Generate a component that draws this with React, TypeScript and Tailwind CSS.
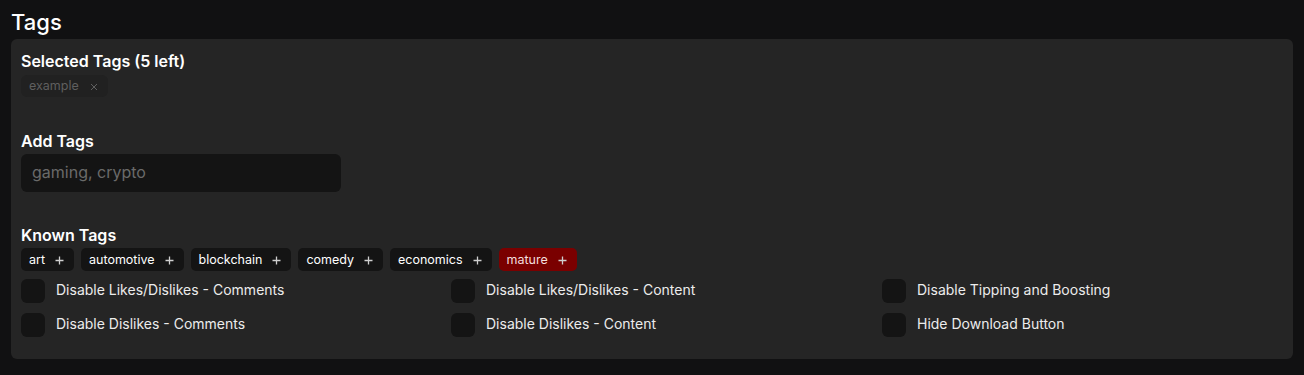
import React, { useState } from 'react';

const knownTags = ['art', 'automotive', 'blockchain', 'comedy', 'economics', 'mature'];

const options = [
  'Disable Likes/Dislikes - Comments',
  'Disable Likes/Dislikes - Content',
  'Disable Tipping and Boosting',
  'Disable Dislikes - Comments',
  'Disable Dislikes - Content',
  'Hide Download Button',
];

const PlusIcon = () => (
  <svg width="9" height="9" viewBox="0 0 9 9" fill="none" stroke="currentColor" strokeWidth="1.3">
    <path d="M4.5 0.5v8M0.5 4.5h8" />
  </svg>
);

const XIcon = () => (
  <svg width="8" height="8" viewBox="0 0 8 8" fill="none" stroke="currentColor" strokeWidth="1">
    <path d="M1 1l6 6M7 1L1 7" />
  </svg>
);

export default function App() {
  const [checked, setChecked] = useState<Record<string, boolean>>({});

  return (
    <div className="min-h-[375px] bg-[#111112] px-[11px] pt-[8px] font-['Inter',sans-serif] text-white">
      <h2 className="text-[22px] leading-[28px] font-medium">Tags</h2>

      <div className="mt-[3px] rounded-md bg-[#252525] px-[10px] pt-[10px] pb-[22px]">
        {/* selected */}
        <div className="text-[16px] leading-[24px] font-semibold">Selected Tags (5 left)</div>
        <div className="mt-[2px] flex">
          <span className="flex h-[22px] items-center gap-[11px] rounded-md bg-[#212121] pl-[8px] pr-[10px] pt-[1px] text-[12.5px] text-[#5f5f5f]">
            example
            <XIcon />
          </span>
        </div>

        {/* add */}
        <div className="mt-[32px] text-[16px] leading-[24px] font-semibold">Add Tags</div>
        <input
          className="mt-[1px] h-[38px] w-[320px] rounded-md bg-[#141414] px-[11px] pb-[2px] text-[16px] text-white placeholder-[#6a6a6a] outline-none"
          placeholder="gaming, crypto"
        />

        {/* known */}
        <div className="mt-[31px] text-[16px] leading-[24px] font-semibold">Known Tags</div>
        <div className="mt-[1px] flex gap-[7px]">
          {knownTags.map((t) => (
            <span
              key={t}
              className={`flex h-[23px] items-center gap-[10px] rounded-[5px] pl-[8px] pr-[10px] pt-[1px] text-[12.5px] ${
                t === 'mature' ? 'bg-[#7a0000] text-[#f3dede]' : 'bg-[#141414] text-white'
              }`}
            >
              {t}
              <span className="text-[#cfcfcf]">
                <PlusIcon />
              </span>
            </span>
          ))}
        </div>

        {/* options */}
        <div className="mt-[8px] grid grid-cols-[430px_431px_1fr] gap-y-[10px]">
          {options.map((o) => (
            <label key={o} className="flex h-[24px] cursor-pointer items-center gap-[11px]">
              <span
                onClick={() => setChecked((p) => ({ ...p, [o]: !p[o] }))}
                className={`h-[24px] w-[24px] shrink-0 rounded-md ${checked[o] ? 'bg-[#7a0000]' : 'bg-[#141414]'}`}
              />
              <span className="pb-[2px] text-[14px] leading-[20px] text-[#ececec]">{o}</span>
            </label>
          ))}
        </div>
      </div>
    </div>
  );
}
